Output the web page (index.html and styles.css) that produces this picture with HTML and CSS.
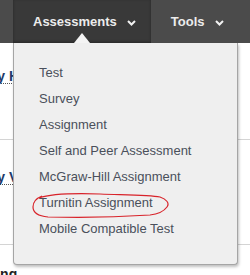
FILE: index.html
```html
<!DOCTYPE html>
<html>
<head>
    <meta charset="UTF-8">
    <title>Assessments menu</title>
    <link rel="stylesheet" href="styles.css">
</head>
<body>
    <div class="topbar">
        <div class="tab tab-open">
            Assessments
            <svg class="chev" width="9" height="6" viewBox="0 0 9 6"><path d="M1 1 L4.5 4.5 L8 1" fill="none" stroke="#f2f2f2" stroke-width="2"/></svg>
        </div>
        <div class="tab">
            Tools
            <svg class="chev" width="9" height="6" viewBox="0 0 9 6"><path d="M1 1 L4.5 4.5 L8 1" fill="none" stroke="#f2f2f2" stroke-width="2"/></svg>
        </div>
    </div>

    <div class="content">
        <div class="row row-first"><a class="item-link">Weekly Homework</a></div>
        <div class="row row-second"><a class="item-link">Weekly Video</a></div>
        <div class="row row-last"><span class="plain">Reading</span></div>
    </div>

    <div class="dropdown">
        <span class="pointer"></span>
        <ul class="menu">
            <li>Test</li>
            <li>Survey</li>
            <li>Assignment</li>
            <li>Self and Peer Assessment</li>
            <li>McGraw-Hill Assignment</li>
            <li>Turnitin Assignment</li>
            <li>Mobile Compatible Test</li>
        </ul>
    </div>

    <svg class="scribble" width="250" height="275" viewBox="0 0 250 275">
        <path d="M39 198 C50 194 70 193 100 194 C130 195 150 195 160 197 C166 199 170 203 167 207 C164 211 160 214 150 215 C120 217 80 218 48 217 C38 216 33 212 33 207 C33 202 37 198 42 196" fill="none" stroke="#d8232a" stroke-width="1.2"/>
    </svg>
</body>
</html>
```

FILE: styles.css
```css
body {
    margin: 0;
    width: 250px;
    height: 275px;
    overflow: hidden;
    font-family: "Liberation Sans", Arial, sans-serif;
    background: #ffffff;
}
.topbar {
    height: 43px;
    background: #4b4b4b;
    display: flex;
    padding-left: 13px;
}
.tab {
    display: flex;
    align-items: center;
    gap: 10px;
    padding: 0 18px 0 20px;
    color: #ececec;
    font-size: 13px;
    font-weight: bold;
    white-space: nowrap;
}
.tab-open {
    background: #393939;
    padding-right: 15px;
    box-shadow: inset 0 -1px 3px rgba(0,0,0,0.3);
}
.chev {
    flex-shrink: 0;
    margin-top: 2px;
}
.row {
    border-bottom: 1px solid #d4d4d4;
    box-sizing: border-box;
    white-space: nowrap;
}
.row-first {
    height: 97px;
    padding-top: 24px;
}
.row-second {
    height: 105px;
    padding-top: 28px;
}
.row-last {
    padding-top: 20px;
    border-bottom: none;
}
.item-link {
    display: inline-block;
    margin-left: -43px;
    color: #1d3a6b;
    font-size: 14px;
    font-weight: bold;
    border-bottom: 1px dotted #555;
    line-height: 14px;
}
.plain {
    display: inline-block;
    margin-left: -38px;
    color: #222;
    font-size: 14px;
    font-weight: bold;
}
.dropdown {
    position: absolute;
    left: 13px;
    top: 43px;
    width: 225px;
    height: 222px;
    box-sizing: border-box;
    background: #efefef;
    border: 1px solid #a5a5a5;
    border-top: none;
    border-radius: 0 0 4px 4px;
    box-shadow: 1px 2px 3px rgba(0,0,0,0.25);
}
.pointer {
    position: absolute;
    left: 60px;
    top: -10px;
    width: 0;
    height: 0;
    border-left: 8px solid transparent;
    border-right: 8px solid transparent;
    border-bottom: 10px solid #f4f4f4;
}
.menu {
    list-style: none;
    margin: 0;
    padding: 17px 0 0 25px;
}
.menu li {
    height: 26px;
    line-height: 26px;
    font-size: 13px;
    color: #4a505b;
}
.scribble {
    position: absolute;
    left: 0;
    top: 0;
    pointer-events: none;
}
```
